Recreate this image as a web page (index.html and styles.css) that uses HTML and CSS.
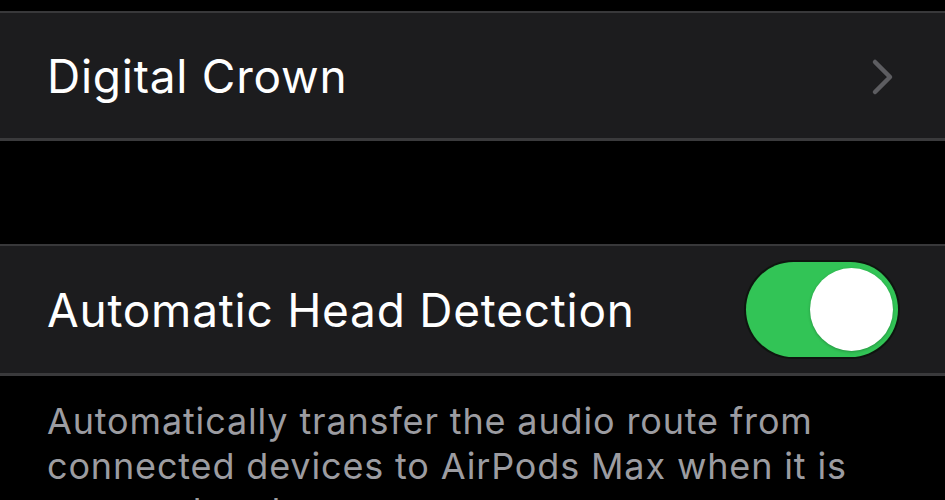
FILE: index.html
```html
<!DOCTYPE html>
<html>
	<head>
		<meta charset="UTF-8">
		<title>AirPods Max</title>
		<link rel="stylesheet" href="styles.css">
	</head>
	<body>
		<div class="screen">
			<div class="group">
				<div class="row">
					<span class="label">Digital Crown</span>
					<svg class="chevron" width="24" height="38" viewBox="0 0 24 38">
						<path d="M4 4 L19 19 L4 34" fill="none" stroke="#5d5d61" stroke-width="4.5" stroke-linecap="round" stroke-linejoin="round"/>
					</svg>
				</div>
			</div>

			<div class="group second">
				<div class="row tall">
					<span class="label">Automatic Head Detection</span>
					<div class="toggle on">
						<span class="knob"></span>
					</div>
				</div>
			</div>

			<p class="note">Automatically transfer the audio route from connected devices to AirPods Max when it is on your head.</p>
		</div>
	</body>
</html>
```

FILE: styles.css
```css
html, body{
	margin: 0;
	padding: 0;
	background-color: #000;
}
body{
	width: 945px;
	height: 500px;
	overflow: hidden;
	font-family: Inter, "Noto Sans", "Liberation Sans", sans-serif;
}
.screen{
	padding-top: 11px;
}
.group{
	background-color: #1c1c1e;
	border-top: 2px solid #38383a;
	border-bottom: 3px solid #3a3a3c;
}
.second{
	margin-top: 103px;
}
.row{
	height: 125px;
	display: flex;
	align-items: center;
	justify-content: space-between;
	padding: 0 50px 0 47px;
}
.row.tall{
	height: 127px;
	padding-right: 47px;
}
.label{
	color: #fff;
	font-size: 46px;
	letter-spacing: 0.75px;
}
.chevron{
	display: block;
	margin-top: 2px;
}
.toggle{
	width: 152px;
	height: 95px;
	border-radius: 48px;
	background-color: #32c456;
	box-shadow: 0 0 0 2px #0e150f;
	display: flex;
	align-items: center;
	justify-content: flex-end;
	padding: 0 5px;
	box-sizing: border-box;
}
.knob{
	width: 83px;
	height: 83px;
	border-radius: 50%;
	background-color: #fff;
	box-shadow: 0 1px 3px rgba(0,0,0,.25);
}
.note{
	margin: 0;
	padding: 23px 60px 0 47px;
	color: #9c9ca1;
	font-size: 36px;
	line-height: 45px;
	letter-spacing: 0.85px;
}
```
